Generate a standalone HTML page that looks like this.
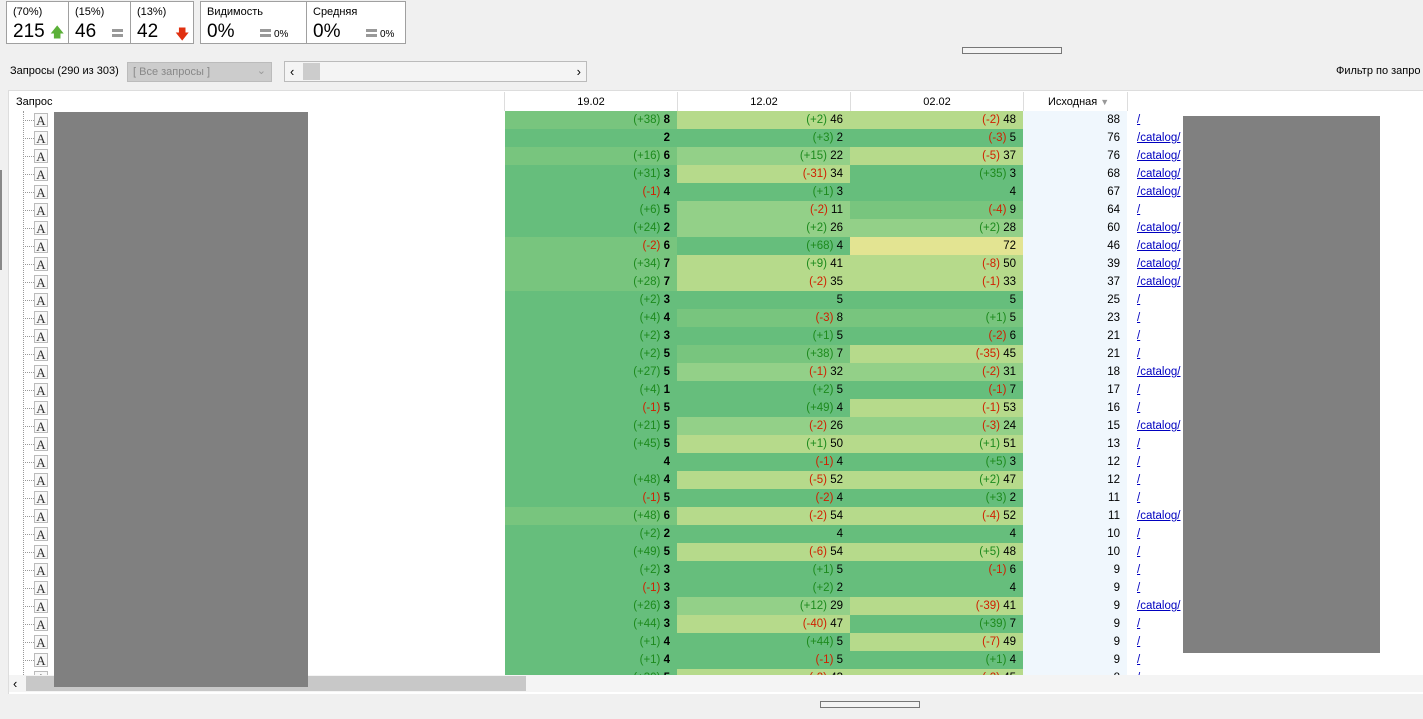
<!DOCTYPE html>
<html><head><meta charset="utf-8"><style>
*{margin:0;padding:0;box-sizing:border-box}
body{width:1423px;height:719px;background:#f0f0f0;font-family:"Liberation Sans",sans-serif;font-size:11px;color:#000;position:relative;overflow:hidden}
.abs{position:absolute}
.box{position:absolute;top:1px;height:43px;background:#fff;border:1px solid #a0a0a0}
.box .sm{position:absolute;left:6px;top:4px;font-size:11px}
.box .big{position:absolute;left:6px;top:19px;font-size:19px}
.eq{display:inline-block;width:11px;height:8px;border-top:3px solid #999;border-bottom:3px solid #999;position:relative}
.eq:after{content:"";position:absolute;left:0;right:0;top:0;height:0}
table{border-collapse:collapse;table-layout:fixed}
td{height:18px;padding:0 7px 0 0;text-align:right;font-size:11.5px;white-space:nowrap;overflow:hidden}
.g{color:#1d8a1d}.r{color:#d02000}
.d{background:#66be7c}.m{background:#78c57e}.l{background:#93d088}.ll{background:#b6da8b}.y{background:#e3e492}
td.s{background:#f0f7fd}
td.u{text-align:left;padding-left:10px}
td.u a{color:#0000c0;text-decoration:underline}
b{font-weight:bold}
.ic{position:absolute;left:34px;width:14px;height:14px;border:1px solid #bbb;background:#f8f8f8;font-family:"Liberation Serif",serif;font-size:13px;line-height:13px;text-align:center;color:#333}
.dot{position:absolute;left:23px;width:11px;border-top:1px dotted #999}
</style></head><body>
<div class="box" style="left:6px;width:63px"><span class="sm">(70%)</span><span class="big">215 <span style="color:#5bb038;font-size:14px">&#129093;</span></span></div>
<div class="box" style="left:68px;width:63px"><span class="sm">(15%)</span><span class="big">46</span><span class="eq abs" style="left:43px;top:26px"></span></div>
<div class="box" style="left:130px;width:64px"><span class="sm">(13%)</span><span class="big">42</span><span class="abs" style="left:44px;top:22px;color:#e03010;font-size:14px">&#129095;</span></div>
<div class="box" style="left:200px;width:107px"><span class="sm">Видимость</span><span class="big">0%</span><span class="eq abs" style="left:59px;top:26px"></span><span class="abs" style="left:73px;top:27px;font-size:10px">0%</span></div>
<div class="box" style="left:306px;width:100px"><span class="sm">Средняя</span><span class="big">0%</span><span class="eq abs" style="left:59px;top:26px"></span><span class="abs" style="left:73px;top:27px;font-size:10px">0%</span></div>
<div class="abs" style="left:962px;top:47px;width:100px;height:7px;border:1px solid #777;background:#f4f4f4"></div>
<div class="abs" style="left:820px;top:701px;width:100px;height:7px;border:1px solid #777;background:#f4f4f4"></div>
<div class="abs" style="left:10px;top:65px">Запросы (290 из 303)</div>
<div class="abs" style="left:127px;top:62px;width:145px;height:20px;background:#ccc;border:1px solid #bbb;color:#888;padding:3px 5px">[ Все запросы ]<span style="position:absolute;right:5px;top:1px;color:#999">&#8964;</span></div>
<div class="abs" style="left:284px;top:61px;width:303px;height:21px;background:#f4f4f4;border:1px solid #bbb"><span class="abs" style="left:5px;top:2px;font-size:13px">&lsaquo;</span><span class="abs" style="left:18px;top:1px;width:17px;height:17px;background:#ccc"></span><span class="abs" style="right:5px;top:2px;font-size:13px">&rsaquo;</span></div>
<div class="abs" style="left:1336px;top:65px">Фильтр по запро</div>
<div class="abs" style="left:8px;top:90px;width:1415px;height:604px;background:#fff;border-top:1px solid #ddd;border-left:1px solid #ddd"></div>
<div class="abs" style="left:16px;top:96px">Запрос</div>
<div class="abs" style="left:504px;top:92px;width:624px;height:19px;border-left:1px solid #ddd"></div>
<div class="abs" style="left:505px;top:96px;width:172px;text-align:center">19.02</div>
<div class="abs" style="left:677px;top:92px;width:174px;height:19px;border-left:1px solid #ddd;border-right:1px solid #ddd;text-align:center;padding-top:4px">12.02</div>
<div class="abs" style="left:851px;top:96px;width:172px;text-align:center">02.02</div>
<div class="abs" style="left:1023px;top:92px;width:105px;height:19px;border-left:1px solid #ddd;border-right:1px solid #ddd;padding-top:4px;padding-left:24px">Исходная <span style="color:#999;font-size:9px">&#9660;</span></div>
<div class="abs" style="left:0;top:111px;width:505px;height:564px;overflow:hidden">
<div style="position:absolute;left:23px;top:0;height:564px;border-left:1px dotted #999"></div>
</div>
<div class="abs" style="left:505px;top:111px;width:918px;height:564px;overflow:hidden">
<table style="width:918px">
<colgroup><col style="width:172px"><col style="width:173px"><col style="width:173px"><col style="width:104px"><col style="width:296px"></colgroup>
<tr><td class="m"><span class="g">(+38)</span> <b>8</b></td><td class="ll"><span class="g">(+2)</span> 46</td><td class="ll"><span class="r">(-2)</span> 48</td><td class="s">88</td><td class="u"><a>/</a></td></tr>
<tr><td class="d"><b>2</b></td><td class="d"><span class="g">(+3)</span> 2</td><td class="d"><span class="r">(-3)</span> 5</td><td class="s">76</td><td class="u"><a>/catalog/</a></td></tr>
<tr><td class="m"><span class="g">(+16)</span> <b>6</b></td><td class="l"><span class="g">(+15)</span> 22</td><td class="ll"><span class="r">(-5)</span> 37</td><td class="s">76</td><td class="u"><a>/catalog/</a></td></tr>
<tr><td class="d"><span class="g">(+31)</span> <b>3</b></td><td class="ll"><span class="r">(-31)</span> 34</td><td class="d"><span class="g">(+35)</span> 3</td><td class="s">68</td><td class="u"><a>/catalog/</a></td></tr>
<tr><td class="d"><span class="r">(-1)</span> <b>4</b></td><td class="d"><span class="g">(+1)</span> 3</td><td class="d">4</td><td class="s">67</td><td class="u"><a>/catalog/</a></td></tr>
<tr><td class="d"><span class="g">(+6)</span> <b>5</b></td><td class="l"><span class="r">(-2)</span> 11</td><td class="m"><span class="r">(-4)</span> 9</td><td class="s">64</td><td class="u"><a>/</a></td></tr>
<tr><td class="d"><span class="g">(+24)</span> <b>2</b></td><td class="l"><span class="g">(+2)</span> 26</td><td class="l"><span class="g">(+2)</span> 28</td><td class="s">60</td><td class="u"><a>/catalog/</a></td></tr>
<tr><td class="m"><span class="r">(-2)</span> <b>6</b></td><td class="d"><span class="g">(+68)</span> 4</td><td class="y">72</td><td class="s">46</td><td class="u"><a>/catalog/</a></td></tr>
<tr><td class="m"><span class="g">(+34)</span> <b>7</b></td><td class="ll"><span class="g">(+9)</span> 41</td><td class="ll"><span class="r">(-8)</span> 50</td><td class="s">39</td><td class="u"><a>/catalog/</a></td></tr>
<tr><td class="m"><span class="g">(+28)</span> <b>7</b></td><td class="ll"><span class="r">(-2)</span> 35</td><td class="ll"><span class="r">(-1)</span> 33</td><td class="s">37</td><td class="u"><a>/catalog/</a></td></tr>
<tr><td class="d"><span class="g">(+2)</span> <b>3</b></td><td class="d">5</td><td class="d">5</td><td class="s">25</td><td class="u"><a>/</a></td></tr>
<tr><td class="d"><span class="g">(+4)</span> <b>4</b></td><td class="m"><span class="r">(-3)</span> 8</td><td class="m"><span class="g">(+1)</span> 5</td><td class="s">23</td><td class="u"><a>/</a></td></tr>
<tr><td class="d"><span class="g">(+2)</span> <b>3</b></td><td class="d"><span class="g">(+1)</span> 5</td><td class="d"><span class="r">(-2)</span> 6</td><td class="s">21</td><td class="u"><a>/</a></td></tr>
<tr><td class="d"><span class="g">(+2)</span> <b>5</b></td><td class="m"><span class="g">(+38)</span> 7</td><td class="ll"><span class="r">(-35)</span> 45</td><td class="s">21</td><td class="u"><a>/</a></td></tr>
<tr><td class="d"><span class="g">(+27)</span> <b>5</b></td><td class="l"><span class="r">(-1)</span> 32</td><td class="l"><span class="r">(-2)</span> 31</td><td class="s">18</td><td class="u"><a>/catalog/</a></td></tr>
<tr><td class="d"><span class="g">(+4)</span> <b>1</b></td><td class="d"><span class="g">(+2)</span> 5</td><td class="d"><span class="r">(-1)</span> 7</td><td class="s">17</td><td class="u"><a>/</a></td></tr>
<tr><td class="d"><span class="r">(-1)</span> <b>5</b></td><td class="d"><span class="g">(+49)</span> 4</td><td class="ll"><span class="r">(-1)</span> 53</td><td class="s">16</td><td class="u"><a>/</a></td></tr>
<tr><td class="d"><span class="g">(+21)</span> <b>5</b></td><td class="l"><span class="r">(-2)</span> 26</td><td class="l"><span class="r">(-3)</span> 24</td><td class="s">15</td><td class="u"><a>/catalog/</a></td></tr>
<tr><td class="d"><span class="g">(+45)</span> <b>5</b></td><td class="ll"><span class="g">(+1)</span> 50</td><td class="ll"><span class="g">(+1)</span> 51</td><td class="s">13</td><td class="u"><a>/</a></td></tr>
<tr><td class="d"><b>4</b></td><td class="d"><span class="r">(-1)</span> 4</td><td class="d"><span class="g">(+5)</span> 3</td><td class="s">12</td><td class="u"><a>/</a></td></tr>
<tr><td class="d"><span class="g">(+48)</span> <b>4</b></td><td class="ll"><span class="r">(-5)</span> 52</td><td class="ll"><span class="g">(+2)</span> 47</td><td class="s">12</td><td class="u"><a>/</a></td></tr>
<tr><td class="d"><span class="r">(-1)</span> <b>5</b></td><td class="d"><span class="r">(-2)</span> 4</td><td class="d"><span class="g">(+3)</span> 2</td><td class="s">11</td><td class="u"><a>/</a></td></tr>
<tr><td class="m"><span class="g">(+48)</span> <b>6</b></td><td class="ll"><span class="r">(-2)</span> 54</td><td class="ll"><span class="r">(-4)</span> 52</td><td class="s">11</td><td class="u"><a>/catalog/</a></td></tr>
<tr><td class="d"><span class="g">(+2)</span> <b>2</b></td><td class="d">4</td><td class="d">4</td><td class="s">10</td><td class="u"><a>/</a></td></tr>
<tr><td class="d"><span class="g">(+49)</span> <b>5</b></td><td class="ll"><span class="r">(-6)</span> 54</td><td class="ll"><span class="g">(+5)</span> 48</td><td class="s">10</td><td class="u"><a>/</a></td></tr>
<tr><td class="d"><span class="g">(+2)</span> <b>3</b></td><td class="d"><span class="g">(+1)</span> 5</td><td class="d"><span class="r">(-1)</span> 6</td><td class="s">9</td><td class="u"><a>/</a></td></tr>
<tr><td class="d"><span class="r">(-1)</span> <b>3</b></td><td class="d"><span class="g">(+2)</span> 2</td><td class="d">4</td><td class="s">9</td><td class="u"><a>/</a></td></tr>
<tr><td class="d"><span class="g">(+26)</span> <b>3</b></td><td class="l"><span class="g">(+12)</span> 29</td><td class="ll"><span class="r">(-39)</span> 41</td><td class="s">9</td><td class="u"><a>/catalog/</a></td></tr>
<tr><td class="d"><span class="g">(+44)</span> <b>3</b></td><td class="ll"><span class="r">(-40)</span> 47</td><td class="d"><span class="g">(+39)</span> 7</td><td class="s">9</td><td class="u"><a>/</a></td></tr>
<tr><td class="d"><span class="g">(+1)</span> <b>4</b></td><td class="d"><span class="g">(+44)</span> 5</td><td class="ll"><span class="r">(-7)</span> 49</td><td class="s">9</td><td class="u"><a>/</a></td></tr>
<tr><td class="d"><span class="g">(+1)</span> <b>4</b></td><td class="d"><span class="r">(-1)</span> 5</td><td class="d"><span class="g">(+1)</span> 4</td><td class="s">9</td><td class="u"><a>/</a></td></tr>
<tr><td class="d"><span class="g">(+30)</span> <b>5</b></td><td class="ll"><span class="r">(-2)</span> 43</td><td class="ll"><span class="r">(-2)</span> 45</td><td class="s">8</td><td class="u"><a>/</a></td></tr>
</table>
</div>
<!-- icons -->
<div class="abs" style="left:0;top:111px;width:60px;height:564px;overflow:hidden">
<div class="dot" style="top:9px"></div><div class="ic" style="top:2px">A</div>
<div class="dot" style="top:27px"></div><div class="ic" style="top:20px">A</div>
<div class="dot" style="top:45px"></div><div class="ic" style="top:38px">A</div>
<div class="dot" style="top:63px"></div><div class="ic" style="top:56px">A</div>
<div class="dot" style="top:81px"></div><div class="ic" style="top:74px">A</div>
<div class="dot" style="top:99px"></div><div class="ic" style="top:92px">A</div>
<div class="dot" style="top:117px"></div><div class="ic" style="top:110px">A</div>
<div class="dot" style="top:135px"></div><div class="ic" style="top:128px">A</div>
<div class="dot" style="top:153px"></div><div class="ic" style="top:146px">A</div>
<div class="dot" style="top:171px"></div><div class="ic" style="top:164px">A</div>
<div class="dot" style="top:189px"></div><div class="ic" style="top:182px">A</div>
<div class="dot" style="top:207px"></div><div class="ic" style="top:200px">A</div>
<div class="dot" style="top:225px"></div><div class="ic" style="top:218px">A</div>
<div class="dot" style="top:243px"></div><div class="ic" style="top:236px">A</div>
<div class="dot" style="top:261px"></div><div class="ic" style="top:254px">A</div>
<div class="dot" style="top:279px"></div><div class="ic" style="top:272px">A</div>
<div class="dot" style="top:297px"></div><div class="ic" style="top:290px">A</div>
<div class="dot" style="top:315px"></div><div class="ic" style="top:308px">A</div>
<div class="dot" style="top:333px"></div><div class="ic" style="top:326px">A</div>
<div class="dot" style="top:351px"></div><div class="ic" style="top:344px">A</div>
<div class="dot" style="top:369px"></div><div class="ic" style="top:362px">A</div>
<div class="dot" style="top:387px"></div><div class="ic" style="top:380px">A</div>
<div class="dot" style="top:405px"></div><div class="ic" style="top:398px">A</div>
<div class="dot" style="top:423px"></div><div class="ic" style="top:416px">A</div>
<div class="dot" style="top:441px"></div><div class="ic" style="top:434px">A</div>
<div class="dot" style="top:459px"></div><div class="ic" style="top:452px">A</div>
<div class="dot" style="top:477px"></div><div class="ic" style="top:470px">A</div>
<div class="dot" style="top:495px"></div><div class="ic" style="top:488px">A</div>
<div class="dot" style="top:513px"></div><div class="ic" style="top:506px">A</div>
<div class="dot" style="top:531px"></div><div class="ic" style="top:524px">A</div>
<div class="dot" style="top:549px"></div><div class="ic" style="top:542px">A</div>
<div class="ic" style="top:560px">A</div>
</div>
<div class="abs" style="left:9px;top:675px;width:1414px;height:17px;background:#f4f4f4"></div>
<div class="abs" style="left:13px;top:676px;font-size:13px">&lsaquo;</div>
<div class="abs" style="left:26px;top:676px;width:500px;height:15px;background:#c8c8c8"></div>
<div class="abs" style="left:54px;top:112px;width:254px;height:575px;background:#808080"></div>
<div class="abs" style="left:1183px;top:116px;width:197px;height:537px;background:#808080"></div>
<div class="abs" style="left:0;top:170px;width:2px;height:100px;background:#888"></div>
</body></html>
